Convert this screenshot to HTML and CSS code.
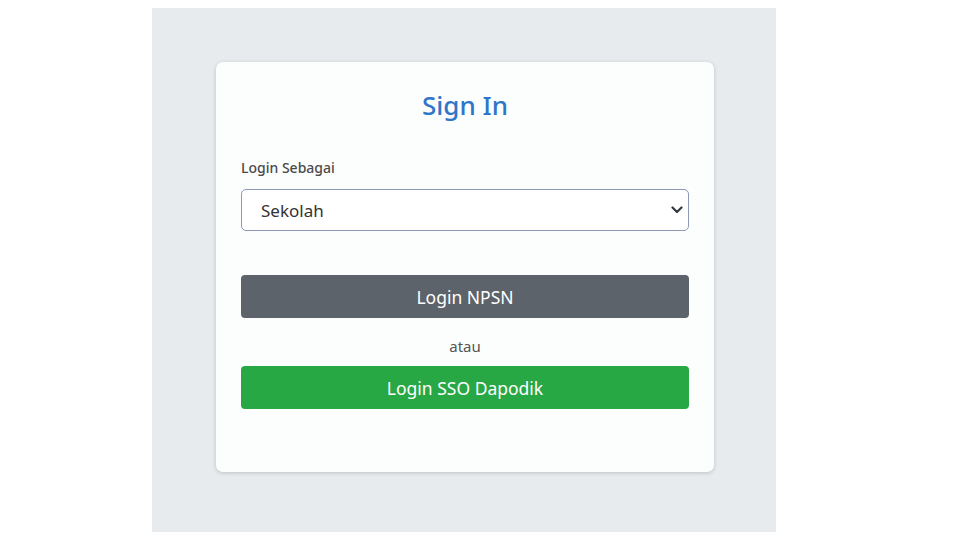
FILE: index.html
```html
<!DOCTYPE html>
<html lang="en">
<head>
    <meta charset="UTF-8">
    <meta name="viewport" content="width=device-width, initial-scale=1.0">
    <title>Sign In</title>
    <link rel="stylesheet" href="styles.css">
</head>
<body>
<main class="panel">
    <section class="card">
        <h2 class="card-title">Sign In</h2>
        <form class="login-form">
            <label for="role" class="field-label">Login Sebagai</label>
            <div class="select-wrap">
                <select id="role" class="field-select">
                    <option value="sekolah">Sekolah</option>
                    <option value="dinas">Dinas</option>
                </select>
                <svg class="select-arrow" width="12" height="8" viewBox="0 0 12 8">
                    <path d="M1.5 1.5 L6 6 L10.5 1.5" fill="none" stroke="#343a40" stroke-width="2.2" stroke-linecap="round" stroke-linejoin="round"/>
                </svg>
            </div>
            <button type="button" class="btn btn-gray">Login NPSN</button>
            <p class="or-text">atau</p>
            <button type="button" class="btn btn-green">Login SSO Dapodik</button>
        </form>
    </section>
</main>
</body>
</html>
```

FILE: styles.css
```css
body{
    margin: 8px;
    background-color: #ffffff;
    font-family: "Noto Sans", "Open Sans", Arial, sans-serif;
}
.panel{
    width: 624px;
    height: 524px;
    margin-left: 144px;
    background-color: #e8ebee;
    padding-top: 54px;
    box-sizing: border-box;
}
.card{
    width: 498px;
    margin-left: 64px;
    box-sizing: border-box;
    padding: 24px 25px 63px;
    background-color: #fcfefd;
    border-radius: 7px;
    box-shadow: 0 1px 4px rgba(0, 0, 0, 0.18);
}
.card-title{
    margin: 0;
    text-align: center;
    color: #2f76c9;
    font-size: 26px;
    font-weight: 500;
    line-height: 38px;
}
.login-form{
    display: flex;
    flex-direction: column;
    margin-top: 35px;
}
.field-label{
    font-size: 14px;
    line-height: 18px;
    color: #4a4a4a;
    font-weight: 500;
}
.select-wrap{
    position: relative;
    margin-top: 12px;
}
.field-select{
    appearance: none;
    width: 100%;
    height: 42px;
    padding: 0 19px;
    border: 1px solid #8d99b5;
    border-radius: 5px;
    background-color: #ffffff;
    color: #333;
    font-family: inherit;
    font-size: 17px;
}
.select-arrow{
    position: absolute;
    right: 6px;
    top: 17px;
    pointer-events: none;
}
.btn{
    height: 43px;
    border: none;
    border-radius: 4px;
    color: #ffffff;
    font-family: inherit;
    font-size: 17.5px;
}
.btn-gray{
    margin-top: 44px;
    background-color: #5c636a;
}
.btn-green{
    margin-top: 10px;
    background-color: #28a745;
}
.or-text{
    margin: 18px 0 0;
    text-align: center;
    font-size: 15px;
    line-height: 20px;
    color: #555;
}
```
